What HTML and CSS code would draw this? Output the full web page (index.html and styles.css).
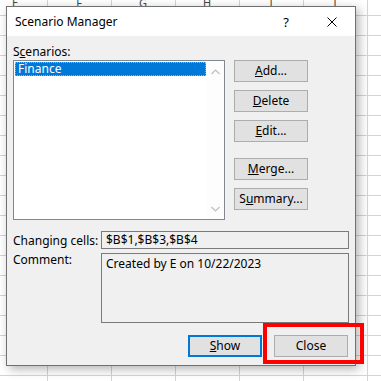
FILE: index.html
```html
<!DOCTYPE html>
<html lang="en">
  <head>
    <meta charset="UTF-8" />
    <title>Scenario Manager</title>
    <link rel="stylesheet" href="styles.css">
  </head>
  <body>
    <div class="sheet">
      <div class="col-head">
        <span>E</span><span>F</span><span>G</span><span>H</span><span>I</span><span>J</span>
      </div>
    </div>

    <div class="dialog">
      <div class="titlebar">
        <span class="title">Scenario Manager</span>
        <span class="tb-btn help">?</span>
        <span class="tb-btn">
          <svg width="10" height="10" viewBox="0 0 10 10">
            <path d="M0.5 0.5 L9.5 9.5 M9.5 0.5 L0.5 9.5" stroke="#000" stroke-width="1" fill="none" />
          </svg>
        </span>
      </div>

      <div class="dlg-body">
        <div class="list-label">S<u>c</u>enarios:</div>

        <div class="main-row">
          <div class="listbox">
            <div class="list-items">
              <div class="item selected">Finance</div>
            </div>
            <div class="vscroll">
              <svg width="9" height="6" viewBox="0 0 9 6">
                <path d="M0.5 5 L4.5 1 L8.5 5" stroke="#bfbfbf" stroke-width="1.2" fill="none" />
              </svg>
              <svg width="9" height="6" viewBox="0 0 9 6">
                <path d="M0.5 1 L4.5 5 L8.5 1" stroke="#bfbfbf" stroke-width="1.2" fill="none" />
              </svg>
            </div>
          </div>

          <div class="side-buttons">
            <button class="btn"><u>A</u>dd...</button>
            <button class="btn"><u>D</u>elete</button>
            <button class="btn"><u>E</u>dit...</button>
            <button class="btn spaced"><u>M</u>erge...</button>
            <button class="btn">S<u>u</u>mmary...</button>
          </div>
        </div>

        <div class="field-row">
          <span class="field-label">Changing cells:</span>
          <div class="field">$B$1,$B$3,$B$4</div>
        </div>

        <div class="field-row comment-row">
          <span class="field-label">Comment:</span>
          <div class="field tall">Created by E on 10/22/2023</div>
        </div>

        <div class="footer">
          <button class="btn default"><u>S</u>how</button>
          <button class="btn">Close</button>
        </div>
      </div>
    </div>

    <div class="highlight"></div>
  </body>
</html>
```

FILE: styles.css
```css
* {
  margin: 0;
  padding: 0;
  box-sizing: border-box;
}

body {
  width: 381px;
  height: 381px;
  overflow: hidden;
  position: relative;
  font-family: 'Noto Sans', 'Open Sans', sans-serif;
  font-size: 12px;
  color: #000;
  background-color: #fff;
  background-image:
    linear-gradient(to right, #d4d4d4 1px, transparent 1px),
    linear-gradient(to bottom, #d4d4d4 1px, transparent 1px);
  background-size: 64px 20px;
  background-position: 47px 15px;
}

/* spreadsheet behind the dialog */
.sheet {
  height: 15px;
  overflow: hidden;
}

.col-head {
  display: flex;
  margin-left: -17px;
  margin-top: -4px;
}

.col-head span {
  width: 64px;
  flex: none;
  text-align: center;
  font-size: 11px;
  line-height: 14px;
  color: #444;
}

/* dialog window */
.dialog {
  position: absolute;
  left: 6px;
  top: 6px;
  width: 350px;
  height: 360px;
  border: 1px solid #707070;
  background: #f0f0f0;
  box-shadow: 3px 3px 10px rgba(0, 0, 0, 0.3);
  display: flex;
  flex-direction: column;
}

.titlebar {
  height: 29px;
  background: #fff;
  display: flex;
  align-items: center;
  flex: none;
}

.title {
  flex: 1;
  padding-left: 8px;
  font-size: 12px;
}

.tb-btn {
  width: 46px;
  height: 29px;
  display: flex;
  align-items: center;
  justify-content: center;
  font-size: 13px;
}

.dlg-body {
  flex: 1;
  padding: 0 6px;
  display: flex;
  flex-direction: column;
}

.list-label {
  padding-top: 7px;
  line-height: 17px;
}

.main-row {
  display: flex;
  gap: 9px;
}

.listbox {
  width: 212px;
  height: 160px;
  border: 1px solid #828790;
  background: #fff;
  display: flex;
}

.list-items {
  flex: 1;
  padding: 1px;
}

.item {
  height: 14px;
  line-height: 13px;
  padding-left: 3px;
}

.item.selected {
  background: #0078d7;
  color: #fff;
  outline: 1px dotted #f5a623;
  outline-offset: -1px;
}

.vscroll {
  width: 17px;
  background: #fdfdfd;
  display: flex;
  flex-direction: column;
  justify-content: space-between;
  align-items: center;
  padding: 8px 0 7px;
}

.side-buttons {
  display: flex;
  flex-direction: column;
  gap: 8px;
}

.btn {
  width: 74px;
  height: 22px;
  background: #e1e1e1;
  border: 1px solid #adadad;
  font-family: inherit;
  font-size: 12px;
  color: #000;
  line-height: 18px;
}

.btn.spaced {
  margin-top: 8px;
}

.btn.default {
  border: 2px solid #0078d7;
}

.field-row {
  display: flex;
  align-items: center;
  margin-top: 11px;
}

.field-label {
  width: 88px;
  flex: none;
}

.field {
  width: 248px;
  height: 18px;
  border: 1px solid #7a7a7a;
  padding-left: 4px;
  line-height: 16px;
}

.comment-row {
  margin-top: 4px;
  align-items: flex-start;
}

.comment-row .field-label {
  line-height: 14px;
}

.field.tall {
  height: 70px;
  padding-top: 2px;
}

.footer {
  display: flex;
  justify-content: flex-end;
  gap: 12px;
  margin-top: 12px;
  padding-right: 1px;
}

/* red annotation around the Close button */
.highlight {
  position: absolute;
  left: 263px;
  top: 323px;
  width: 101px;
  height: 41px;
  border: 4px solid #ff0000;
}
```
